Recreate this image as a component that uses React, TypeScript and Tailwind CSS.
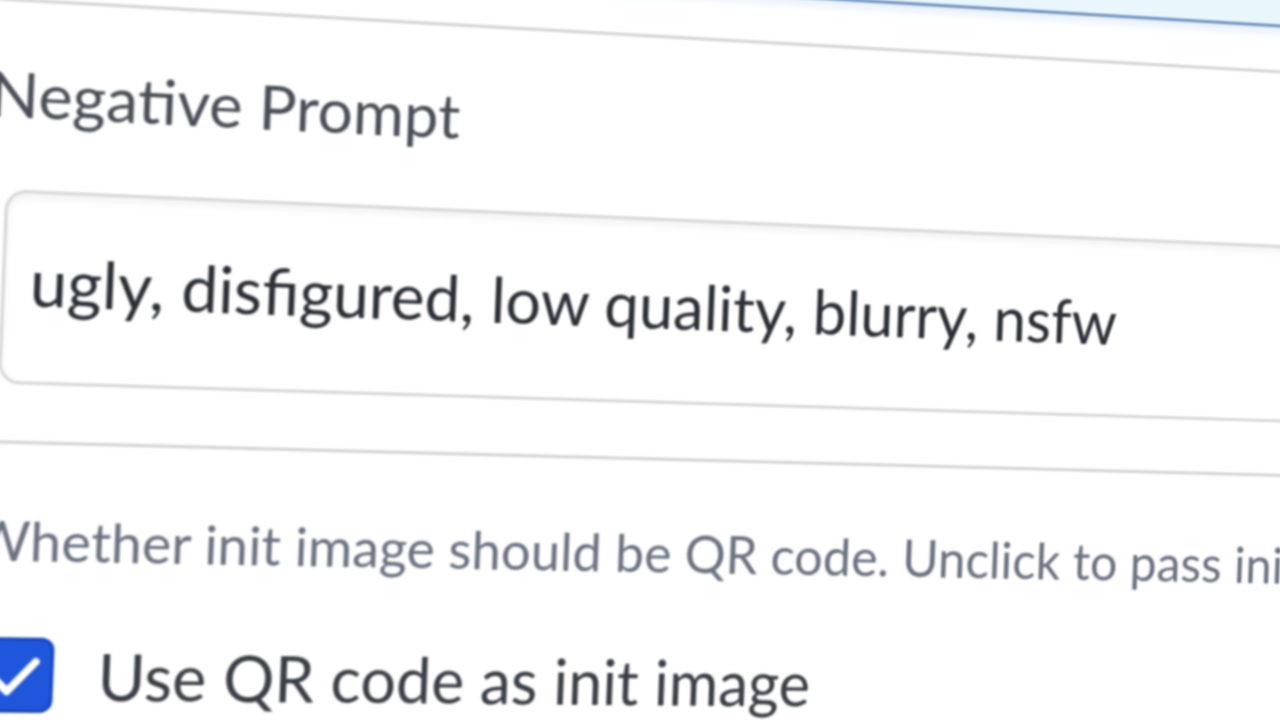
const CheckIcon = () => (
  <svg viewBox="0 0 72 72" className="w-[72px] h-[72px]" fill="none">
    <polyline
      points="14,38 29,53 57,22"
      stroke="white"
      strokeWidth="8"
      strokeLinecap="round"
      strokeLinejoin="round"
    />
  </svg>
);

const App = () => {
  return (
    <div className="relative w-[1280px] h-[720px] overflow-hidden bg-white font-['Lato','Liberation_Sans',sans-serif]">
      <div className="w-[1400px] origin-[640px_400px] [transform:perspective(1200px)_rotateY(5deg)_rotate(2.2deg)] blur-[1px]">
        {/* previous (focused) textbox */}
        <div className="-mt-[112px] pl-[28px] pb-[45px] border-b-[3px] border-[#d2d2d2]">
          <div className="h-[101px] rounded-b-[18px] border-[3px] border-[#6a8fbe] bg-[#e9f6fc] shadow-[0_6px_10px_#e4eefa]" />
        </div>

        {/* negative prompt */}
        <div className="pl-[10px] pt-[58px] pb-[54px] border-b-[3px] border-[#d2d2d2]">
          <span className="block text-[60px] leading-none text-[#4a4f57] whitespace-nowrap">Negative Prompt</span>
          <div className="mt-[62px] ml-[18px] h-[186px] rounded-[20px] border-[3px] border-[#d6d6d6] shadow-[inset_0_5px_8px_rgba(0,0,0,0.05)] pl-[23px] pt-[53px]">
            <span className="block text-[62px] leading-none text-[#2b2f36] whitespace-nowrap">
              ugly, disfigured, low quality, blurry, nsfw
            </span>
          </div>
        </div>

        {/* qr checkbox */}
        <div className="pl-[10px] pt-[66px] pb-[40px]">
          <span className="block text-[52px] leading-none text-[#6b7280] whitespace-nowrap">
            Whether init image should be QR code. Unclick to pass init image or generate init image with Stable Diffusion 2.1
          </span>
          <label className="mt-[67px] pl-[8px] flex items-center gap-[41px]">
            <span className="flex items-center justify-center w-[72px] h-[72px] rounded-[12px] bg-[#1f56db] border-[3px] border-[#1b47b8]">
              <CheckIcon />
            </span>
            <span className="text-[61px] leading-none text-[#3b3f46] whitespace-nowrap">Use QR code as init image</span>
          </label>
        </div>
      </div>
    </div>
  );
};

export default App;
